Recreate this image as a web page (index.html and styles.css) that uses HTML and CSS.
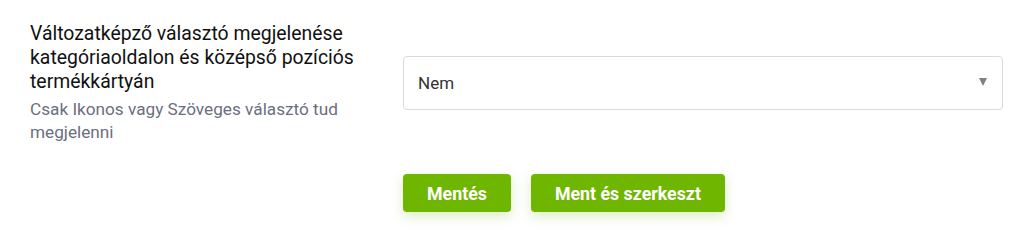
FILE: index.html
```html
<!DOCTYPE html>
<html lang="hu">
<head>
<meta charset="utf-8">
<link rel="stylesheet" href="styles.css">
</head>
<body>
<div class="form">
  <div class="row">
    <div class="label-col">
      <div class="label">Változatképző választó megjelenése kategóriaoldalon és középső pozíciós termékkártyán</div>
      <div class="hint">Csak Ikonos vagy Szöveges választó tud megjelenni</div>
    </div>
    <div class="field-col">
      <div class="select">
        <span class="value">Nem</span>
        <span class="arrow"></span>
      </div>
    </div>
  </div>
  <div class="actions">
    <button class="btn">Mentés</button>
    <button class="btn">Ment és szerkeszt</button>
  </div>
</div>
</body>
</html>
```
FILE: styles.css
```css
html, body {
  margin: 0;
  padding: 0;
  background: #ffffff;
}
body {
  font-family: Roboto, "Liberation Sans", Arial, sans-serif;
  width: 1035px;
  height: 234px;
  overflow: hidden;
}
.form {
  padding: 22px 32px 0 30px;
}
.row {
  display: flex;
  align-items: center;
}
.label-col {
  width: 373px;
  flex: none;
}
.label {
  font-size: 19.4px;
  line-height: 24px;
  color: #111111;
  padding-right: 10px;
}
.hint {
  margin-top: 4px;
  font-size: 17.2px;
  line-height: 23px;
  color: #6b6f80;
  padding-right: 20px;
}
.field-col {
  flex: 1;
}
.select {
  box-sizing: border-box;
  height: 54px;
  border: 1px solid #d9dadd;
  border-radius: 4px;
  display: flex;
  align-items: center;
  justify-content: space-between;
  padding: 0 15px 0 14px;
  background: #fff;
}
.value {
  font-size: 17px;
  color: #333333;
}
.arrow {
  width: 0;
  height: 0;
  border-left: 4.5px solid transparent;
  border-right: 4.5px solid transparent;
  border-top: 8px solid #808080;
  margin-top: -2px;
}
.actions {
  display: flex;
  gap: 20px;
  margin-left: 373px;
  margin-top: 30px;
}
.btn {
  height: 38px;
  border: none;
  border-radius: 4px;
  background: #6fb600;
  color: #ffffff;
  font-family: Roboto, "Liberation Sans", Arial, sans-serif;
  font-size: 17.8px;
  font-weight: 700;
  padding: 0 24px;
  box-shadow: 0 4px 12px rgba(111, 182, 0, 0.25);
  cursor: pointer;
}
```
